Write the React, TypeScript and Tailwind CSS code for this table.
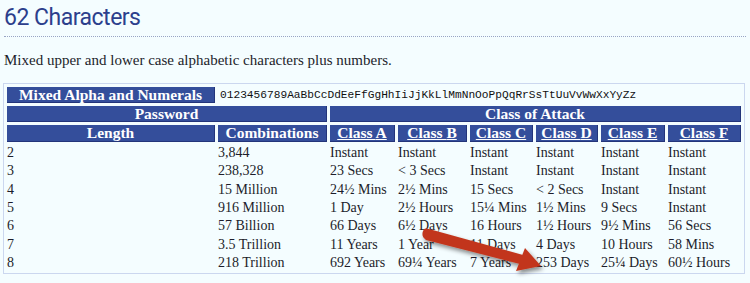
import React from "react"

const serif = "font-['Liberation_Serif',serif]"

const rows = [
  ["2", "3,844", "Instant", "Instant", "Instant", "Instant", "Instant", "Instant"],
  ["3", "238,328", "23 Secs", "< 3 Secs", "Instant", "Instant", "Instant", "Instant"],
  ["4", "15 Million", "24½ Mins", "2½ Mins", "15 Secs", "< 2 Secs", "Instant", "Instant"],
  ["5", "916 Million", "1 Day", "2½ Hours", "15¼ Mins", "1½ Mins", "9 Secs", "Instant"],
  ["6", "57 Billion", "66 Days", "6½ Days", "16 Hours", "1½ Hours", "9½ Mins", "56 Secs"],
  ["7", "3.5 Trillion", "11 Years", "1 Year", "11 Days", "4 Days", "10 Hours", "58 Mins"],
  ["8", "218 Trillion", "692 Years", "69¼ Years", "7 Years", "253 Days", "25¼ Days", "60½ Hours"],
]

const classes = ["A", "B", "C", "D", "E", "F"]

const th = "bg-[#344e9b] text-white font-bold text-[15.5px] p-0 border-r border-b border-[#23357a]"

function Arrow() {
  return (
    <svg className="absolute left-0 top-0 pointer-events-none" width="750" height="283">
      <defs>
        <filter id="sh" x="-20%" y="-50%" width="140%" height="200%">
          <feDropShadow dx="2" dy="3" stdDeviation="2" floodColor="#000" floodOpacity="0.45" />
        </filter>
      </defs>
      <g filter="url(#sh)" fill="#c2361c">
        <path d="M424 229 Q420 236 426 240 L520 264 L523 255 L429 229 Q426 228 424 229 Z" />
        <polygon points="541,266 516,271 525,248" />
      </g>
    </svg>
  )
}

export default function App() {
  return (
    <div className="relative w-[750px] h-[283px] bg-[#f4fdff] overflow-hidden">
      <h1 className="mx-[4px] pt-[2px] pb-[2px] text-[23px] leading-[32px] tracking-[-0.5px] text-[#2c3f8c] font-['Roboto',sans-serif] border-b border-dotted border-[#98a4c4]">
        62 Characters
      </h1>
      <p className={`${serif} mx-[4px] mt-[13px] text-[15px] leading-[20px] text-[#1d1d2b]`}>
        Mixed upper and lower case alphabetic characters plus numbers.
      </p>

      <table className={`${serif} ml-[3px] mt-[13px] table-fixed border-separate border-spacing-[3px] border border-[#cbd7ef] text-[14px] text-[#1d1d2b]`}>
        <colgroup>
          <col className="w-[208px]" />
          <col className="w-[109px]" />
          <col className="w-[65px]" />
          <col className="w-[69px]" />
          <col className="w-[63px]" />
          <col className="w-[62px]" />
          <col className="w-[64px]" />
          <col className="w-[73px]" />
        </colgroup>
        <thead>
          <tr className="h-[15px]">
            <th className={`${th} leading-[15px]`}>Mixed Alpha and Numerals</th>
            <td colSpan={7} className="p-0 pl-[2px] font-['Liberation_Mono',monospace] text-[11.2px] leading-[15px] text-[#111]">
              0123456789AaBbCcDdEeFfGgHhIiJjKkLlMmNnOoPpQqRrSsTtUuVvWwXxYyZz
            </td>
          </tr>
          <tr className="h-[15px]">
            <th colSpan={2} className={`${th} leading-[15px]`}>Password</th>
            <th colSpan={6} className={`${th} leading-[15px]`}>Class of Attack</th>
          </tr>
          <tr className="h-[16px]">
            <th className={`${th} leading-[16px]`}>Length</th>
            <th className={`${th} leading-[16px]`}>Combinations</th>
            {classes.map((c) => (
              <th key={c} className={`${th} leading-[16px]`}>
                <a href="#" className="underline">Class {c}</a>
              </th>
            ))}
          </tr>
        </thead>
        <tbody>
          {rows.map((r) => (
            <tr key={r[0]} className="h-[15.3px]">
              {r.map((v, i) => (
                <td key={i} className="p-0 leading-[15px] whitespace-nowrap">
                  {v}
                </td>
              ))}
            </tr>
          ))}
        </tbody>
      </table>

      <Arrow />
    </div>
  )
}
